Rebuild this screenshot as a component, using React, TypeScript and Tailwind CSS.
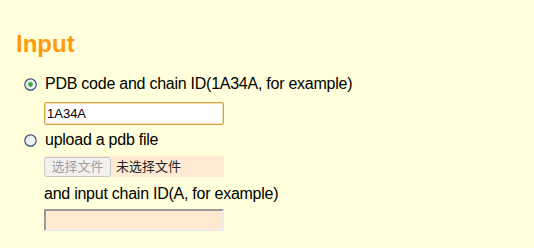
import React, { useState } from "react";

function Radio({ checked }: { checked: boolean }) {
  return (
    <svg width="13" height="13" viewBox="0 0 13 13" className="shrink-0">
      <defs>
        <linearGradient id={checked ? "rg1" : "rg2"} x1="0" y1="0" x2="1" y2="1">
          <stop offset="0" stopColor="#dfe3ea" />
          <stop offset="1" stopColor="#ffffff" />
        </linearGradient>
      </defs>
      <circle
        cx="6.5"
        cy="6.5"
        r="5.7"
        fill={`url(#${checked ? "rg1" : "rg2"})`}
        stroke="#3e5178"
        strokeWidth="1.2"
      />
      {checked && <circle cx="6.5" cy="6.5" r="2.4" fill="#3aa83a" />}
    </svg>
  );
}

export default function App() {
  const [mode, setMode] = useState<"code" | "file">("code");
  const [code, setCode] = useState("1A34A");
  const [chain, setChain] = useState("");

  return (
    <div
      className="min-h-[248px] w-full bg-[#ffffdc] pl-4 pt-[30px] text-black"
      style={{ fontFamily: '"Liberation Sans", Arial, "Noto Sans CJK SC", sans-serif' }}
    >
      <h2 className="text-[24px] leading-[28px] font-bold text-[#ff9a10]">Input</h2>

      <div className="mt-[17px] pl-2">
        {/* PDB code */}
        <label
          className="flex cursor-pointer items-center gap-2 text-[16px] leading-[18px] tracking-[-0.25px]"
          onClick={() => setMode("code")}
        >
          <Radio checked={mode === "code"} />
          <span>PDB code and chain ID(1A34A, for example)</span>
        </label>
        <div className="mt-[9px] pl-5">
          <input
            value={code}
            onChange={(e) => setCode(e.target.value)}
            className="block h-[23px] w-[180px] rounded-[2px] border border-[#dba248] bg-white px-[2px] text-[13px] text-black outline-none shadow-[inset_0_0_0_1px_#f3dcb0]"
          />
        </div>

        {/* upload */}
        <label
          className="mt-[6px] flex cursor-pointer items-center gap-2 text-[16px] leading-[18px] tracking-[-0.25px]"
          onClick={() => setMode("file")}
        >
          <Radio checked={mode === "file"} />
          <span>upload a pdb file</span>
        </label>
        <div className="mt-[7px] pl-5">
          <div className="flex h-[21px] w-[180px] items-center bg-[#ffebd3] text-[13px]">
            <button className="flex h-[20px] w-[67px] items-center justify-center rounded-[3px] border border-[#c8c8c8] bg-[#f3f1ee] text-[#a0a0a0]">
              选择文件
            </button>
            <span className="ml-[5px] text-[#222]">未选择文件</span>
          </div>
          <div className="mt-[8px] text-[16px] leading-[18px] tracking-[-0.25px]">
            and input chain ID(A, for example)
          </div>
          <input
            value={chain}
            onChange={(e) => setChain(e.target.value)}
            className="mt-[6px] block h-[22px] w-[180px] border-2 border-t-[#9a9a9a] border-l-[#9a9a9a] border-r-[#ececec] border-b-[#ececec] bg-[#ffe9cf] px-[2px] text-[13px] outline-none"
          />
        </div>
      </div>
    </div>
  );
}
